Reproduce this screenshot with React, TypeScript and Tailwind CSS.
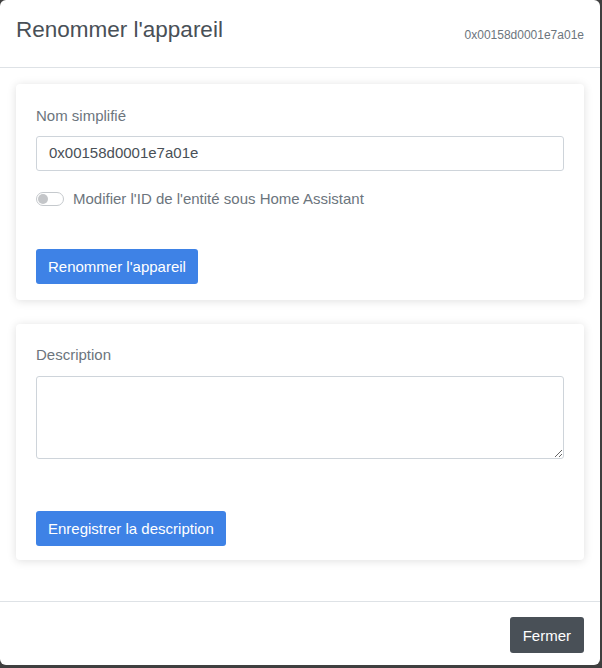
export default function App() {
  return (
    <div className="h-[668px] w-full bg-[#3f3f3f] font-['Liberation_Sans',Arial,sans-serif]">
      <div className="w-[600px] h-[665px] bg-white rounded-md flex flex-col overflow-hidden">
        {/* Header */}
        <div className="h-[68px] shrink-0 flex items-center justify-between px-4 border-b border-[#dee2e6]">
          <h5 className="text-[22.5px] leading-7 text-[#495057] pb-[8px]">Renommer l'appareil</h5>
          <span className="text-xs text-[#6c757d] pt-[2px]">0x00158d0001e7a01e</span>
        </div>

        {/* Body */}
        <div className="flex-1 px-4 pt-4 flex flex-col gap-[24px]">
          <div className="bg-white rounded-sm shadow-[0_1px_10px_rgba(0,0,0,0.13)] px-5 pt-[21px] pb-[16px]">
            <label className="block text-[15px] text-[#6c757d] leading-[22px]">Nom simplifié</label>
            <div className="mt-[9px] h-[35px] border border-[#ced4da] rounded-[3px] px-3 flex items-center text-[15px] text-[#495057]">
              0x00158d0001e7a01e
            </div>
            <div className="mt-[18px] flex items-center gap-[9px] h-[20px]">
              <div className="w-[28px] h-[14px] rounded-full border border-[#c5c9cd] bg-white flex items-center px-[1px]">
                <div className="w-[10px] h-[10px] rounded-full bg-[#c4c6c9]" />
              </div>
              <span className="text-[15px] text-[#6c757d]">Modifier l'ID de l'entité sous Home Assistant</span>
            </div>
            <button className="mt-[40px] h-[35px] px-3 rounded-[3px] bg-[#3e82e6] text-white text-[15px] leading-none">
              Renommer l'appareil
            </button>
          </div>

          <div className="bg-white rounded-sm shadow-[0_1px_10px_rgba(0,0,0,0.13)] px-5 pt-[20px] pb-[14px]">
            <label className="block text-[15px] text-[#6c757d] leading-[22px]">Description</label>
            <textarea className="mt-[10px] block w-full h-[83px] border border-[#ced4da] rounded-[3px] px-3 text-[15px] text-[#495057]" />
            <button className="mt-[52px] h-[35px] px-3 rounded-[3px] bg-[#3e82e6] text-white text-[15px] leading-none">
              Enregistrer la description
            </button>
          </div>
        </div>

        {/* Footer */}
        <div className="h-[64px] shrink-0 border-t border-[#dee2e6] flex items-start justify-end px-4 pt-[15px]">
          <button className="h-[36px] px-[13px] rounded-[3px] bg-[#495057] text-white text-[15px] leading-none">Fermer</button>
        </div>
      </div>
    </div>
  );
}
